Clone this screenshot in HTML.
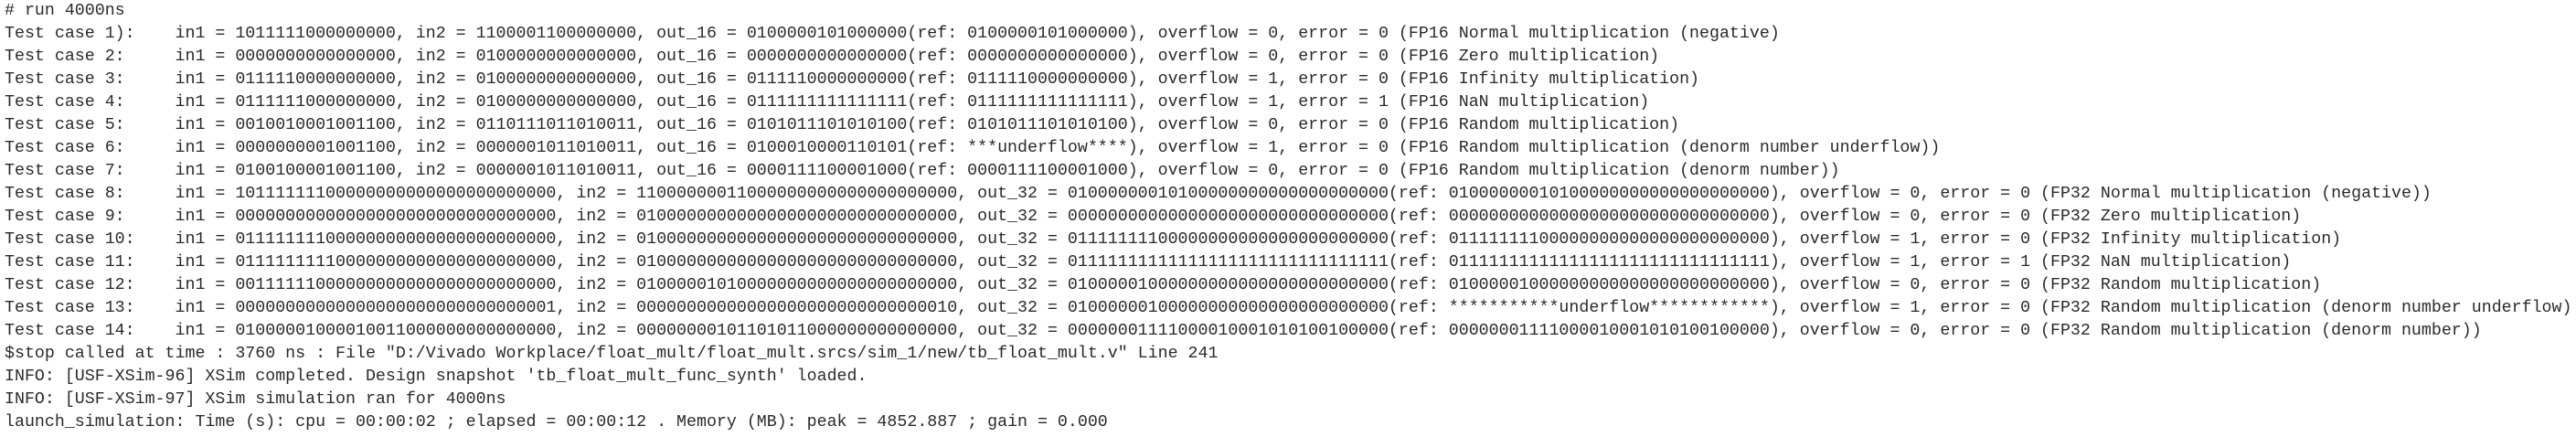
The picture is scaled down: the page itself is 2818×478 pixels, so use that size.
<!DOCTYPE html>
<html><head><meta charset="utf-8"><style>
html,body{margin:0;padding:0;background:#fff;}
body{width:2818px;height:478px;overflow:hidden;position:relative;}
.l{position:absolute;left:5px;height:25px;line-height:25px;white-space:pre;font-family:"Liberation Mono","Courier New",monospace;font-size:18.3px;color:#2a2a2a;}
</style></head><body>
<div class="l" style="top:0px"># run 4000ns</div>
<div class="l" style="top:25px">Test case 1):    in1 = 1011111000000000, in2 = 1100001100000000, out_16 = 0100000101000000(ref: 0100000101000000), overflow = 0, error = 0 (FP16 Normal multiplication (negative)</div>
<div class="l" style="top:50px">Test case 2:     in1 = 0000000000000000, in2 = 0100000000000000, out_16 = 0000000000000000(ref: 0000000000000000), overflow = 0, error = 0 (FP16 Zero multiplication)</div>
<div class="l" style="top:75px">Test case 3:     in1 = 0111110000000000, in2 = 0100000000000000, out_16 = 0111110000000000(ref: 0111110000000000), overflow = 1, error = 0 (FP16 Infinity multiplication)</div>
<div class="l" style="top:100px">Test case 4:     in1 = 0111111000000000, in2 = 0100000000000000, out_16 = 0111111111111111(ref: 0111111111111111), overflow = 1, error = 1 (FP16 NaN multiplication)</div>
<div class="l" style="top:125px">Test case 5:     in1 = 0010010001001100, in2 = 0110111011010011, out_16 = 0101011101010100(ref: 0101011101010100), overflow = 0, error = 0 (FP16 Random multiplication)</div>
<div class="l" style="top:150px">Test case 6:     in1 = 0000000001001100, in2 = 0000001011010011, out_16 = 0100010000110101(ref: ***underflow****), overflow = 1, error = 0 (FP16 Random multiplication (denorm number underflow))</div>
<div class="l" style="top:175px">Test case 7:     in1 = 0100100001001100, in2 = 0000001011010011, out_16 = 0000111100001000(ref: 0000111100001000), overflow = 0, error = 0 (FP16 Random multiplication (denorm number))</div>
<div class="l" style="top:200px">Test case 8:     in1 = 10111111100000000000000000000000, in2 = 11000000011000000000000000000000, out_32 = 01000000010100000000000000000000(ref: 01000000010100000000000000000000), overflow = 0, error = 0 (FP32 Normal multiplication (negative))</div>
<div class="l" style="top:225px">Test case 9:     in1 = 00000000000000000000000000000000, in2 = 01000000000000000000000000000000, out_32 = 00000000000000000000000000000000(ref: 00000000000000000000000000000000), overflow = 0, error = 0 (FP32 Zero multiplication)</div>
<div class="l" style="top:250px">Test case 10:    in1 = 01111111100000000000000000000000, in2 = 01000000000000000000000000000000, out_32 = 01111111100000000000000000000000(ref: 01111111100000000000000000000000), overflow = 1, error = 0 (FP32 Infinity multiplication)</div>
<div class="l" style="top:275px">Test case 11:    in1 = 01111111110000000000000000000000, in2 = 01000000000000000000000000000000, out_32 = 01111111111111111111111111111111(ref: 01111111111111111111111111111111), overflow = 1, error = 1 (FP32 NaN multiplication)</div>
<div class="l" style="top:300px">Test case 12:    in1 = 00111111000000000000000000000000, in2 = 01000001010000000000000000000000, out_32 = 01000001000000000000000000000000(ref: 01000001000000000000000000000000), overflow = 0, error = 0 (FP32 Random multiplication)</div>
<div class="l" style="top:325px">Test case 13:    in1 = 00000000000000000000000000000001, in2 = 00000000000000000000000000000010, out_32 = 01000000100000000000000000000000(ref: ***********underflow************), overflow = 1, error = 0 (FP32 Random multiplication (denorm number underflow)</div>
<div class="l" style="top:350px">Test case 14:    in1 = 01000001000010011000000000000000, in2 = 00000000101101011000000000000000, out_32 = 00000001111000010001010100100000(ref: 00000001111000010001010100100000), overflow = 0, error = 0 (FP32 Random multiplication (denorm number))</div>
<div class="l" style="top:375px">$stop called at time : 3760 ns : File "D:/Vivado Workplace/float_mult/float_mult.srcs/sim_1/new/tb_float_mult.v" Line 241</div>
<div class="l" style="top:400px">INFO: [USF-XSim-96] XSim completed. Design snapshot 'tb_float_mult_func_synth' loaded.</div>
<div class="l" style="top:425px">INFO: [USF-XSim-97] XSim simulation ran for 4000ns</div>
<div class="l" style="top:450px">launch_simulation: Time (s): cpu = 00:00:02 ; elapsed = 00:00:12 . Memory (MB): peak = 4852.887 ; gain = 0.000</div>
</body></html>
